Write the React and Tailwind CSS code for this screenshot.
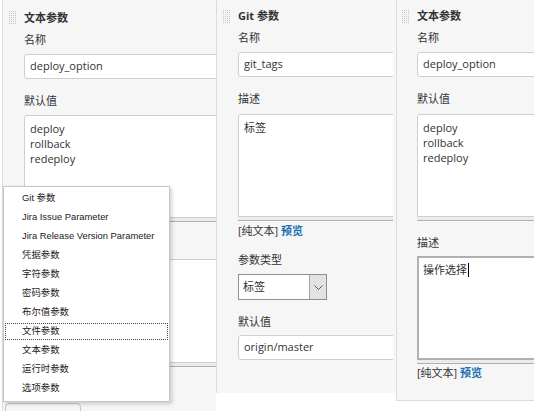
import React from "react";

const Grip = () => (
    <svg width="7" height="14" viewBox="0 0 7 14" className="block">
        {[0, 2, 4, 6].map((x) =>
            [0, 2, 4, 6, 8, 10, 12].map((y) => (
                <rect key={`${x}-${y}`} x={x} y={y} width="1" height="1" fill="#c4c4c4" />
            ))
        )}
    </svg>
);

const Label = ({children, className = ""}) => (
    <div className={`h-[16px] leading-[16px] text-[11px] text-[#333] whitespace-nowrap ${className}`}>{children}</div>
);

const TextInput = ({value, className = ""}) => (
    <div className={`w-[320px] h-[25px] bg-white border border-[#cfcfcf] rounded-[3px] pl-[5px] flex items-center text-[11px] text-[#333] ${className}`}>
        {value}
    </div>
);

const TextArea = ({lines, h = "h-[103px]", className = "", focused = false}) => (
    <div className={className}>
        <div className={`w-[320px] ${h} bg-white ${focused ? 'border-2 border-[#b0b0b0] pl-[4px] pt-[4px]' : 'border border-[#cfcfcf] rounded-t-[3px] pl-[5px] pt-[5px]'} text-[11px] leading-[15px] text-[#333]`}>
            {lines.map((l, i) => (
                <div key={i} className="flex items-center">
                    {l}
                    {focused && i === lines.length - 1 && <span className="inline-block w-[1px] h-[14px] bg-black ml-[1px]" />}
                </div>
            ))}
        </div>
        <div className="w-[320px] h-[4px] bg-[#ececec] border-b border-[#a9b2bb]" />
    </div>
);

const PreviewLink = ({className = ""}) => (
    <div className={`h-[16px] leading-[16px] text-[11px] whitespace-nowrap ${className}`}>
        <span className="text-[#333]">[纯文本]</span>{' '}
        <span className="text-[#1d6fb3] font-bold">预览</span>
    </div>
);

const menuItems = [
    'Git 参数', 'Jira Issue Parameter', 'Jira Release Version Parameter',
    '凭据参数', '字符参数', '密码参数', '布尔值参数', '文件参数',
    '文本参数', '运行时参数', '选项参数',
];

const App = () => {
    return (
        <div className="w-[534px] h-[411px] overflow-hidden relative bg-white flex font-['Open_Sans','Noto_Sans_CJK_SC',sans-serif]">
            {/* left panel: text param, mostly under the open menu */}
            <div className="ml-[2px] w-[214px] h-[411px] border-l border-[#dcdcdc] bg-[#f6f6f6] flex overflow-hidden shrink-0">
                <div className="w-[21px] shrink-0 pl-[6px] pt-[11px]"><Grip /></div>
                <div className="flex flex-col pt-[1px]">
                    <Label className="mt-[9px] font-bold">文本参数</Label>
                    <Label className="mt-[6px]">名称</Label>
                    <TextInput value="deploy_option" className="mt-[6px]" />
                    <Label className="mt-[14px]">默认值</Label>
                    <TextArea lines={['deploy', 'rollback', 'redeploy']} className="mt-[6px]" />
                    <div className="h-[16px] mt-[15px]" />
                    <TextArea lines={['']} h="h-[104px]" className="mt-[6px]" />
                </div>
            </div>

            {/* middle panel: git param */}
            <div className="w-[177px] h-[393px] border-l border-[#dcdcdc] bg-[#f6f6f6] flex overflow-hidden shrink-0">
                <div className="w-[21px] shrink-0 pl-[6px] pt-[10px]"><Grip /></div>
                <div className="flex flex-col">
                    <Label className="mt-[8px] font-bold">Git 参数</Label>
                    <Label className="mt-[6px]">名称</Label>
                    <TextInput value="git_tags" className="mt-[6px]" />
                    <Label className="mt-[14px]">描述</Label>
                    <TextArea lines={['标签']} className="mt-[7px]" />
                    <PreviewLink className="mt-[2px]" />
                    <Label className="mt-[13px]">参数类型</Label>
                    <div className="mt-[6px] w-[89px] h-[26px] bg-white border border-[#8f8f8f] flex text-[11px] text-[#333]">
                        <div className="flex-1 pl-[4px] flex items-center">标签</div>
                        <div className="w-[17px] bg-[#e3e3e3] border-l border-[#a6a6a6] flex items-center justify-center">
                            <svg width="9" height="5" viewBox="0 0 9 5"><path d="M0.5 0.5 L4.5 4.5 L8.5 0.5" fill="none" stroke="#555" strokeWidth="1" /></svg>
                        </div>
                    </div>
                    <Label className="mt-[14px]">默认值</Label>
                    <TextInput value="origin/master" className="mt-[5px]" />
                </div>
            </div>
            <div className="w-[3px] h-[393px] bg-[#f6f6f6] shrink-0" />

            {/* right panel: text param */}
            <div className="flex-1 h-[401px] border-l border-b border-[#dcdcdc] bg-[#f6f6f6] flex overflow-hidden">
                <div className="w-[20px] shrink-0 pl-[5px] pt-[10px]"><Grip /></div>
                <div className="flex flex-col">
                    <Label className="mt-[8px] font-bold">文本参数</Label>
                    <Label className="mt-[6px]">名称</Label>
                    <TextInput value="deploy_option" className="mt-[6px]" />
                    <Label className="mt-[14px]">默认值</Label>
                    <TextArea lines={['deploy', 'rollback', 'redeploy']} className="mt-[7px]" />
                    <Label className="mt-[14px]">描述</Label>
                    <TextArea lines={['操作选择']} h="h-[104px]" focused className="mt-[5px]" />
                    <PreviewLink className="mt-[1px]" />
                </div>
            </div>

            {/* add-parameter button peeking under the menu */}
            <div className="absolute left-[5px] top-[403px] w-[76px] h-[12px] bg-[#f6f6f6] border border-[#c6c6c6] rounded-t-[4px]" />

            {/* open select menu */}
            <div className="absolute left-[3px] top-[186px] w-[167px] h-[216px] bg-white border border-[#c6c6c6] shadow-[2px_2px_4px_rgba(0,0,0,0.18)] pt-[2px] font-['Liberation_Sans','Noto_Sans_CJK_SC',sans-serif]">
                {menuItems.map((item) => (
                    <div key={item} className="h-[19px] p-[1px]">
                        <div className={`h-full pl-[16px] flex items-center text-[9.4px] text-[#1a1a1a] whitespace-nowrap border ${item === '文件参数' ? 'border-dotted border-[#444]' : 'border-transparent'}`}>
                            {item}
                        </div>
                    </div>
                ))}
            </div>
        </div>
    );
};

export default App;
